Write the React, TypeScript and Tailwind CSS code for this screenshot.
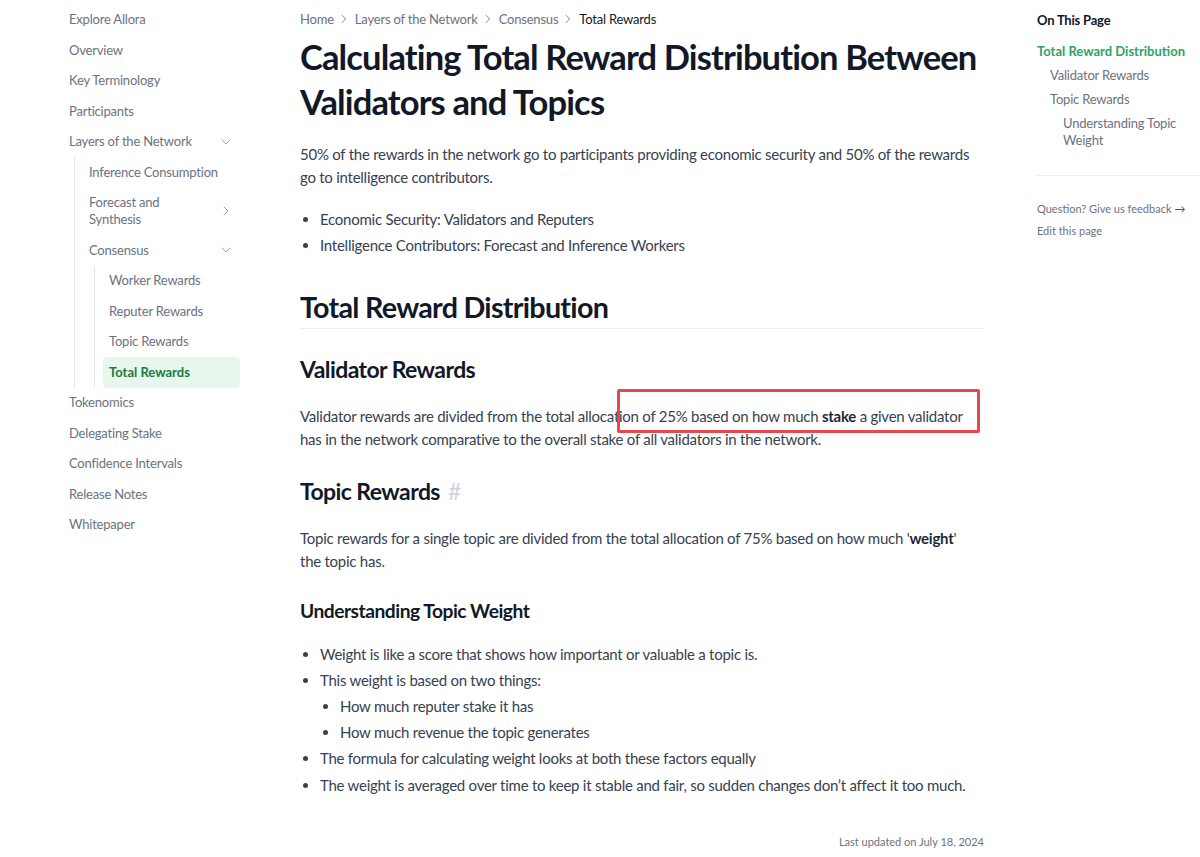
import { ChevronDown, ChevronRight } from "lucide-react";

type NavItem = {
  label: string;
  open?: boolean;
  collapsed?: boolean;
  active?: boolean;
  children?: NavItem[];
};

const NAV: NavItem[] = [
  { label: "Explore Allora" },
  { label: "Overview" },
  { label: "Key Terminology" },
  { label: "Participants" },
  {
    label: "Layers of the Network",
    open: true,
    children: [
      { label: "Inference Consumption" },
      { label: "Forecast and Synthesis", collapsed: true },
      {
        label: "Consensus",
        open: true,
        children: [
          { label: "Worker Rewards" },
          { label: "Reputer Rewards" },
          { label: "Topic Rewards" },
          { label: "Total Rewards", active: true },
        ],
      },
    ],
  },
  { label: "Tokenomics" },
  { label: "Delegating Stake" },
  { label: "Confidence Intervals" },
  { label: "Release Notes" },
  { label: "Whitepaper" },
];

const FONT = { fontFamily: "Lato, 'Noto Sans', sans-serif" };

function NavList({ items, nested }: { items: NavItem[]; nested?: boolean }) {
  return (
    <ul
      className={
        nested
          ? "ml-[11px] border-l border-[#e5e7eb] pl-[8px]"
          : "flex flex-col"
      }
    >
      {items.map((item) => (
        <li key={item.label}>
          <div
            className={
              "flex items-center justify-between rounded-[4px] px-[6px] py-[6.75px] text-[13px] leading-[17px] " +
              (item.active
                ? "bg-[#e8f7ed] font-bold text-[#1b7a3f]"
                : "tracking-[-0.2px] text-[#6b7280]")
            }
          >
            <span className={item.collapsed ? "w-[100px]" : ""}>{item.label}</span>
            {item.open && (
              <ChevronDown size={16} strokeWidth={1.5} className="shrink-0 text-[#9ca3af]" />
            )}
            {item.collapsed && (
              <ChevronRight size={16} strokeWidth={1.5} className="shrink-0 text-[#9ca3af]" />
            )}
          </div>
          {item.children && <NavList items={item.children} nested />}
        </li>
      ))}
    </ul>
  );
}

function Breadcrumb() {
  const parts = ["Home", "Layers of the Network", "Consensus"];
  return (
    <div className="flex items-center text-[13px] leading-[20px] tracking-[-0.2px] text-[#6b7280]">
      {parts.map((p) => (
        <span key={p} className="flex items-center">
          <span>{p}</span>
          <ChevronRight size={14} strokeWidth={1.5} className="ml-[3px] mr-[4px] text-[#6b7280]" />
        </span>
      ))}
      <span className="text-[#111827]">Total Rewards</span>
    </div>
  );
}

export default function App() {
  return (
    <div className="relative flex w-[1200px] bg-white" style={FONT}>
      {/* left sidebar */}
      <aside className="w-[240px] shrink-0 pl-[63px] pt-[4.5px]">
        <NavList items={NAV} />
      </aside>

      {/* main article */}
      <main className="ml-[60px] w-[684px] shrink-0 pt-[9px] text-[15px] leading-[23px] tracking-[-0.25px] text-[#374151]">
        <Breadcrumb />
        <h1 className="mt-[4.5px] text-[34.5px] font-bold leading-[45px] tracking-tight text-[#111827]">
          Calculating Total Reward Distribution Between Validators and Topics
        </h1>
        <p className="mt-[19px]">
          50% of the rewards in the network go to participants providing economic security and 50%
          of the rewards go to intelligence contributors.
        </p>
        <ul className="mt-[19px] list-disc pl-[20px]">
          <li>Economic Security: Validators and Reputers</li>
          <li className="mt-[3px]">Intelligence Contributors: Forecast and Inference Workers</li>
        </ul>

        <h2 className="mt-[32.5px] border-b border-[#eceef1] pb-[3px] text-[28.7px] font-bold leading-[36px] tracking-tight text-[#111827]">
          Total Reward Distribution
        </h2>

        <h3 className="mt-[24px] text-[23px] font-bold leading-[32px] tracking-tight text-[#111827]">
          Validator Rewards
        </h3>
        <p className="mt-[19.5px]">
          Validator rewards are divided from the total allocation of 25% based on how much{" "}
          <strong className="font-bold text-[#1f2937]">stake</strong> a given validator has in the
          network comparative to the overall stake of all validators in the network.
        </p>

        <h3 className="mt-[24.5px] flex items-baseline text-[23px] font-bold leading-[32px] tracking-tight text-[#111827]">
          Topic Rewards
          <span className="ml-[8px] font-normal text-[#d1d5db]">#</span>
        </h3>
        <p className="mt-[19.5px] max-w-[672px]">
          Topic rewards for a single topic are divided from the total allocation of 75% based on how
          much '<strong className="font-bold text-[#1f2937]">weight</strong>' the topic has.
        </p>

        <h4 className="mt-[24.5px] text-[19.2px] font-bold leading-[28px] tracking-tight text-[#111827]">
          Understanding Topic Weight
        </h4>
        <ul className="mt-[17.5px] list-disc pl-[20px]">
          <li>Weight is like a score that shows how important or valuable a topic is.</li>
          <li className="mt-[3px]">
            This weight is based on two things:
            <ul className="list-disc pl-[20px]">
              <li className="mt-[3px]">How much reputer stake it has</li>
              <li className="mt-[3px]">How much revenue the topic generates</li>
            </ul>
          </li>
          <li className="mt-[3.5px]">The formula for calculating weight looks at both these factors equally</li>
          <li className="mt-[3.5px]">
            The weight is averaged over time to keep it stable and fair, so sudden changes don’t
            affect it too much.
          </li>
        </ul>

        <div className="mt-[37px] pb-[10px] text-right text-[11px] leading-[16px] tracking-normal text-[#6b7280]">
          Last updated on July 18, 2024
        </div>
      </main>

      {/* right toc */}
      <nav className="ml-[53px] w-[163px] shrink-0 overflow-hidden pt-[11px]">
        <p className="text-[13px] font-bold leading-[18px] tracking-[-0.2px] text-[#111827]">On This Page</p>
        <ul className="mt-[14px] flex flex-col gap-[7px] text-[13px] leading-[17px]">
          <li className="font-bold text-[#2ea364]">Total Reward Distribution</li>
          <li className="pl-[13px] tracking-[-0.2px] text-[#6b7280]">Validator Rewards</li>
          <li className="pl-[13px] tracking-[-0.2px] text-[#6b7280]">Topic Rewards</li>
          <li className="pl-[26px] tracking-[-0.2px] text-[#6b7280]">Understanding Topic Weight</li>
        </ul>
        <div className="mt-[26px] border-t border-[#eceef1] pt-[25px] text-[11px] leading-[16px] text-[#6b7280]">
          <p className="flex items-center gap-[3px]">
            Question? Give us feedback <span className="text-[#4b5563]">→</span>
          </p>
          <p className="mt-[6px]">Edit this page</p>
        </div>
      </nav>

      {/* annotation box */}
      <div className="pointer-events-none absolute left-[617px] top-[389px] h-[44px] w-[363px] rounded-[2px] border-[3px] border-[#e5484d]" />
    </div>
  );
}
